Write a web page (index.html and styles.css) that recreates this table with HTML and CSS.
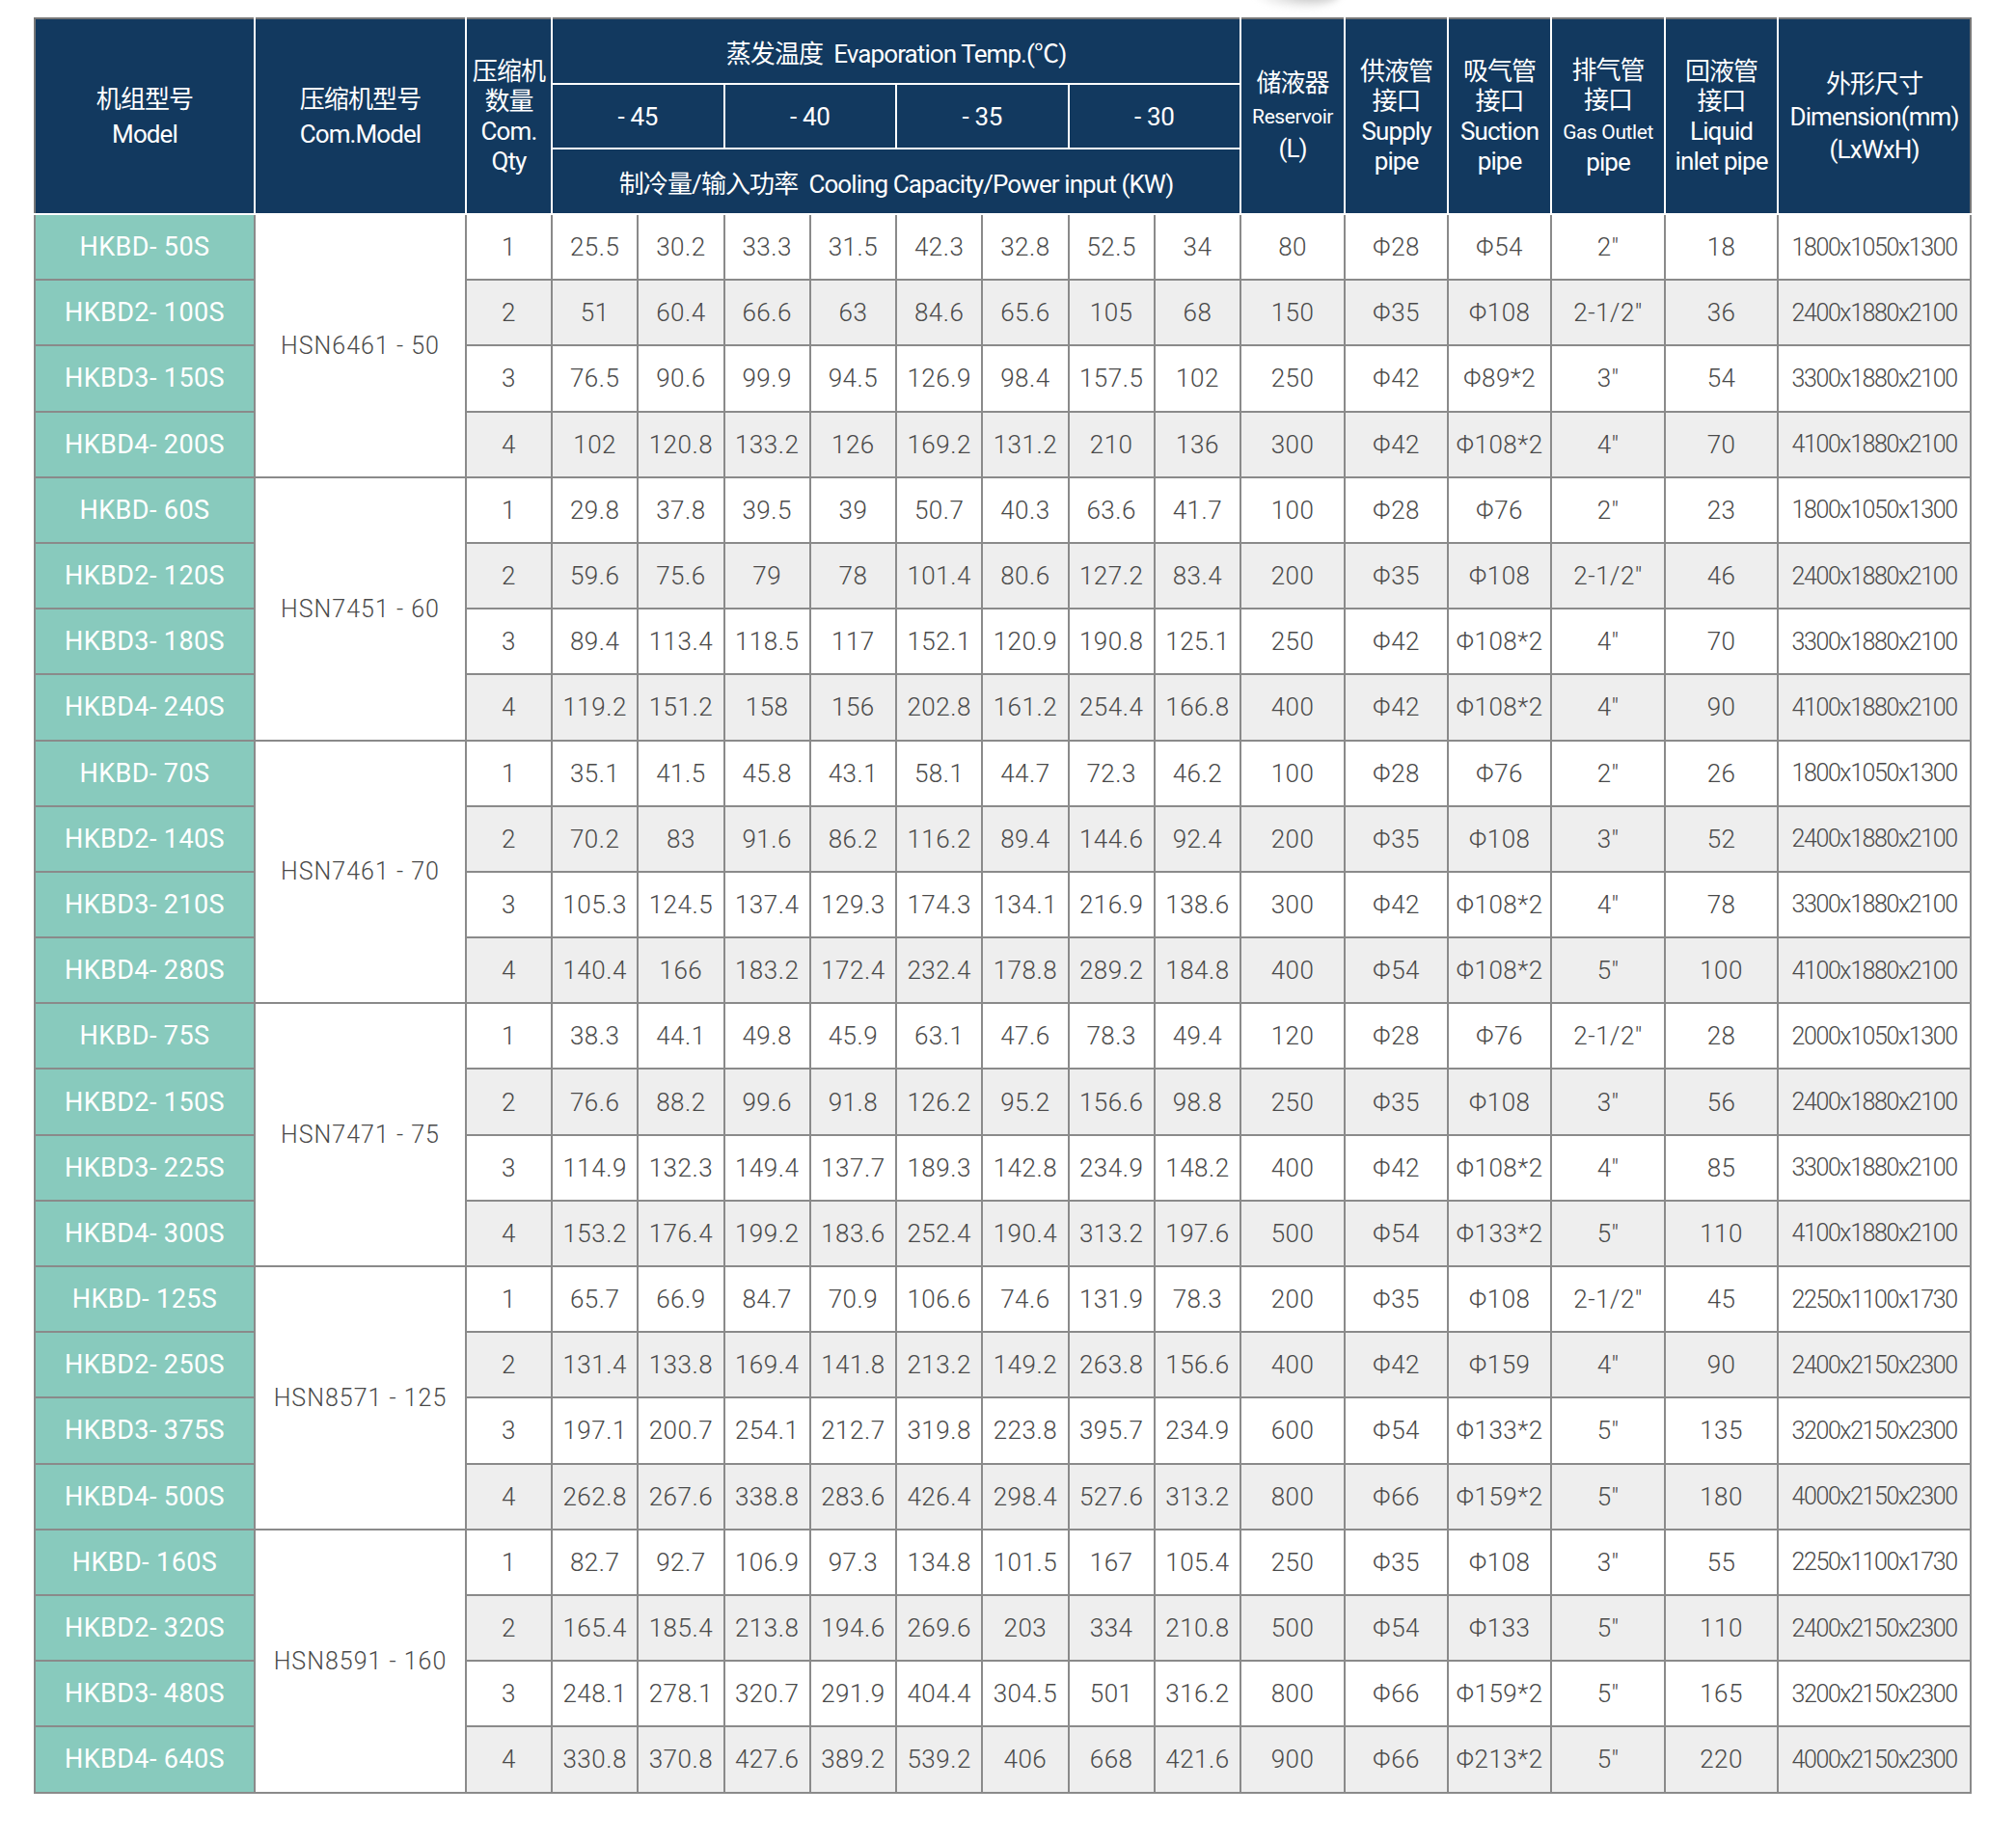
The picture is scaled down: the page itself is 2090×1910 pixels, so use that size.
FILE: index.html
```html
<!DOCTYPE html>
<html lang="zh">
<head>
<meta charset="utf-8">
<title>HKBD</title>
<link rel="stylesheet" href="styles.css">
</head>
<body>
<div class="page">
<div class="shadow"></div>
<table class="spec">
<colgroup>
<col class="c-model"><col class="c-com"><col class="c-qty">
<col class="c-d"><col class="c-d"><col class="c-d"><col class="c-d"><col class="c-d"><col class="c-d"><col class="c-d"><col class="c-d">
<col class="c-res"><col class="c-sup"><col class="c-suc"><col class="c-gas"><col class="c-liq"><col class="c-dim">
</colgroup>
<thead>
<tr class="h1">
<th rowspan="3" class="first lh36">机组型号<br>Model</th>
<th rowspan="3" class="lh36">压缩机型号<br>Com.Model</th>
<th rowspan="3" class="lh31">压缩机<br>数量<br>Com.<br>Qty</th>
<th colspan="8">蒸发温度&nbsp;&nbsp;Evaporation Temp.(℃)</th>
<th rowspan="3" class="lh35">储液器<br><span class="sm">Reservoir</span><br>(L)</th>
<th rowspan="3" class="lh31">供液管<br>接口<br>Supply<br>pipe</th>
<th rowspan="3" class="lh31">吸气管<br>接口<br>Suction<br>pipe</th>
<th rowspan="3" class="lh31">排气管<br>接口<br><span class="sm">Gas Outlet</span><br>pipe</th>
<th rowspan="3" class="lh31">回液管<br>接口<br>Liquid<br>inlet pipe</th>
<th rowspan="3" class="last lh34">外形尺寸<br>Dimension(mm)<br>(LxWxH)</th>
</tr>
<tr class="h2">
<th colspan="2">- 45</th><th colspan="2">- 40</th><th colspan="2">- 35</th><th colspan="2">- 30</th>
</tr>
<tr class="h3">
<th colspan="8">制冷量/输入功率&nbsp;&nbsp;Cooling Capacity/Power input (KW)</th>
</tr>
</thead>
<tbody>
<tr><td class="m">HKBD- 50S</td><td rowspan="4" class="cm">HSN6461 - 50</td><td>1</td><td>25.5</td><td>30.2</td><td>33.3</td><td>31.5</td><td>42.3</td><td>32.8</td><td>52.5</td><td>34</td><td>80</td><td>Φ28</td><td>Φ54</td><td>2″</td><td>18</td><td class="dim">1800x1050x1300</td></tr>
<tr class="alt"><td class="m">HKBD2- 100S</td><td>2</td><td>51</td><td>60.4</td><td>66.6</td><td>63</td><td>84.6</td><td>65.6</td><td>105</td><td>68</td><td>150</td><td>Φ35</td><td>Φ108</td><td>2-1/2″</td><td>36</td><td class="dim">2400x1880x2100</td></tr>
<tr><td class="m">HKBD3- 150S</td><td>3</td><td>76.5</td><td>90.6</td><td>99.9</td><td>94.5</td><td>126.9</td><td>98.4</td><td>157.5</td><td>102</td><td>250</td><td>Φ42</td><td>Φ89*2</td><td>3″</td><td>54</td><td class="dim">3300x1880x2100</td></tr>
<tr class="alt"><td class="m">HKBD4- 200S</td><td>4</td><td>102</td><td>120.8</td><td>133.2</td><td>126</td><td>169.2</td><td>131.2</td><td>210</td><td>136</td><td>300</td><td>Φ42</td><td>Φ108*2</td><td>4″</td><td>70</td><td class="dim">4100x1880x2100</td></tr>

<tr><td class="m">HKBD- 60S</td><td rowspan="4" class="cm">HSN7451 - 60</td><td>1</td><td>29.8</td><td>37.8</td><td>39.5</td><td>39</td><td>50.7</td><td>40.3</td><td>63.6</td><td>41.7</td><td>100</td><td>Φ28</td><td>Φ76</td><td>2″</td><td>23</td><td class="dim">1800x1050x1300</td></tr>
<tr class="alt"><td class="m">HKBD2- 120S</td><td>2</td><td>59.6</td><td>75.6</td><td>79</td><td>78</td><td>101.4</td><td>80.6</td><td>127.2</td><td>83.4</td><td>200</td><td>Φ35</td><td>Φ108</td><td>2-1/2″</td><td>46</td><td class="dim">2400x1880x2100</td></tr>
<tr><td class="m">HKBD3- 180S</td><td>3</td><td>89.4</td><td>113.4</td><td>118.5</td><td>117</td><td>152.1</td><td>120.9</td><td>190.8</td><td>125.1</td><td>250</td><td>Φ42</td><td>Φ108*2</td><td>4″</td><td>70</td><td class="dim">3300x1880x2100</td></tr>
<tr class="alt"><td class="m">HKBD4- 240S</td><td>4</td><td>119.2</td><td>151.2</td><td>158</td><td>156</td><td>202.8</td><td>161.2</td><td>254.4</td><td>166.8</td><td>400</td><td>Φ42</td><td>Φ108*2</td><td>4″</td><td>90</td><td class="dim">4100x1880x2100</td></tr>

<tr><td class="m">HKBD- 70S</td><td rowspan="4" class="cm">HSN7461 - 70</td><td>1</td><td>35.1</td><td>41.5</td><td>45.8</td><td>43.1</td><td>58.1</td><td>44.7</td><td>72.3</td><td>46.2</td><td>100</td><td>Φ28</td><td>Φ76</td><td>2″</td><td>26</td><td class="dim">1800x1050x1300</td></tr>
<tr class="alt"><td class="m">HKBD2- 140S</td><td>2</td><td>70.2</td><td>83</td><td>91.6</td><td>86.2</td><td>116.2</td><td>89.4</td><td>144.6</td><td>92.4</td><td>200</td><td>Φ35</td><td>Φ108</td><td>3″</td><td>52</td><td class="dim">2400x1880x2100</td></tr>
<tr><td class="m">HKBD3- 210S</td><td>3</td><td>105.3</td><td>124.5</td><td>137.4</td><td>129.3</td><td>174.3</td><td>134.1</td><td>216.9</td><td>138.6</td><td>300</td><td>Φ42</td><td>Φ108*2</td><td>4″</td><td>78</td><td class="dim">3300x1880x2100</td></tr>
<tr class="alt"><td class="m">HKBD4- 280S</td><td>4</td><td>140.4</td><td>166</td><td>183.2</td><td>172.4</td><td>232.4</td><td>178.8</td><td>289.2</td><td>184.8</td><td>400</td><td>Φ54</td><td>Φ108*2</td><td>5″</td><td>100</td><td class="dim">4100x1880x2100</td></tr>

<tr><td class="m">HKBD- 75S</td><td rowspan="4" class="cm">HSN7471 - 75</td><td>1</td><td>38.3</td><td>44.1</td><td>49.8</td><td>45.9</td><td>63.1</td><td>47.6</td><td>78.3</td><td>49.4</td><td>120</td><td>Φ28</td><td>Φ76</td><td>2-1/2″</td><td>28</td><td class="dim">2000x1050x1300</td></tr>
<tr class="alt"><td class="m">HKBD2- 150S</td><td>2</td><td>76.6</td><td>88.2</td><td>99.6</td><td>91.8</td><td>126.2</td><td>95.2</td><td>156.6</td><td>98.8</td><td>250</td><td>Φ35</td><td>Φ108</td><td>3″</td><td>56</td><td class="dim">2400x1880x2100</td></tr>
<tr><td class="m">HKBD3- 225S</td><td>3</td><td>114.9</td><td>132.3</td><td>149.4</td><td>137.7</td><td>189.3</td><td>142.8</td><td>234.9</td><td>148.2</td><td>400</td><td>Φ42</td><td>Φ108*2</td><td>4″</td><td>85</td><td class="dim">3300x1880x2100</td></tr>
<tr class="alt"><td class="m">HKBD4- 300S</td><td>4</td><td>153.2</td><td>176.4</td><td>199.2</td><td>183.6</td><td>252.4</td><td>190.4</td><td>313.2</td><td>197.6</td><td>500</td><td>Φ54</td><td>Φ133*2</td><td>5″</td><td>110</td><td class="dim">4100x1880x2100</td></tr>

<tr><td class="m">HKBD- 125S</td><td rowspan="4" class="cm">HSN8571 - 125</td><td>1</td><td>65.7</td><td>66.9</td><td>84.7</td><td>70.9</td><td>106.6</td><td>74.6</td><td>131.9</td><td>78.3</td><td>200</td><td>Φ35</td><td>Φ108</td><td>2-1/2″</td><td>45</td><td class="dim">2250x1100x1730</td></tr>
<tr class="alt"><td class="m">HKBD2- 250S</td><td>2</td><td>131.4</td><td>133.8</td><td>169.4</td><td>141.8</td><td>213.2</td><td>149.2</td><td>263.8</td><td>156.6</td><td>400</td><td>Φ42</td><td>Φ159</td><td>4″</td><td>90</td><td class="dim">2400x2150x2300</td></tr>
<tr><td class="m">HKBD3- 375S</td><td>3</td><td>197.1</td><td>200.7</td><td>254.1</td><td>212.7</td><td>319.8</td><td>223.8</td><td>395.7</td><td>234.9</td><td>600</td><td>Φ54</td><td>Φ133*2</td><td>5″</td><td>135</td><td class="dim">3200x2150x2300</td></tr>
<tr class="alt"><td class="m">HKBD4- 500S</td><td>4</td><td>262.8</td><td>267.6</td><td>338.8</td><td>283.6</td><td>426.4</td><td>298.4</td><td>527.6</td><td>313.2</td><td>800</td><td>Φ66</td><td>Φ159*2</td><td>5″</td><td>180</td><td class="dim">4000x2150x2300</td></tr>

<tr><td class="m">HKBD- 160S</td><td rowspan="4" class="cm">HSN8591 - 160</td><td>1</td><td>82.7</td><td>92.7</td><td>106.9</td><td>97.3</td><td>134.8</td><td>101.5</td><td>167</td><td>105.4</td><td>250</td><td>Φ35</td><td>Φ108</td><td>3″</td><td>55</td><td class="dim">2250x1100x1730</td></tr>
<tr class="alt"><td class="m">HKBD2- 320S</td><td>2</td><td>165.4</td><td>185.4</td><td>213.8</td><td>194.6</td><td>269.6</td><td>203</td><td>334</td><td>210.8</td><td>500</td><td>Φ54</td><td>Φ133</td><td>5″</td><td>110</td><td class="dim">2400x2150x2300</td></tr>
<tr><td class="m">HKBD3- 480S</td><td>3</td><td>248.1</td><td>278.1</td><td>320.7</td><td>291.9</td><td>404.4</td><td>304.5</td><td>501</td><td>316.2</td><td>800</td><td>Φ66</td><td>Φ159*2</td><td>5″</td><td>165</td><td class="dim">3200x2150x2300</td></tr>
<tr class="alt"><td class="m">HKBD4- 640S</td><td>4</td><td>330.8</td><td>370.8</td><td>427.6</td><td>389.2</td><td>539.2</td><td>406</td><td>668</td><td>421.6</td><td>900</td><td>Φ66</td><td>Φ213*2</td><td>5″</td><td>220</td><td class="dim">4000x2150x2300</td></tr>
</tbody>
</table>
</div>
</body>
</html>
```
FILE: styles.css
```css
* { box-sizing: border-box; }
html, body { margin: 0; padding: 0; background: #ffffff; }
.page {
  position: relative;
  padding: 18px 0 0 35px;
  width: 2090px;
  height: 1910px;
  font-family: Roboto, "Noto Sans CJK SC", sans-serif;
}
.shadow {
  position: absolute;
  left: 1300px;
  top: -24px;
  width: 90px;
  height: 34px;
  border-radius: 50%;
  background: radial-gradient(ellipse at 65% 50%, rgba(120,120,120,0.55) 0%, rgba(160,160,160,0.25) 45%, rgba(255,255,255,0) 75%);
  filter: blur(3px);
}
.spec {
  border-collapse: collapse;
  table-layout: fixed;
  width: 2007px;
}
.c-model { width: 228px; }
.c-com { width: 219px; }
.c-qty { width: 89px; }
.c-d { width: 89.25px; }
.c-res { width: 108px; }
.c-sup { width: 107px; }
.c-suc { width: 107px; }
.c-gas { width: 118px; }
.c-liq { width: 117px; }
.c-dim { width: 200px; }

thead th {
  background: #12395f;
  color: #ffffff;
  font-weight: 400;
  font-size: 26px;
  letter-spacing: -0.9px;
  border: 2px solid #ffffff;
  text-align: center;
  vertical-align: middle;
  padding: 0;
  white-space: nowrap;
  font-family: Roboto, "Noto Sans CJK SC", sans-serif;
}
thead tr.h1 th { border-top: 2px solid #777777; }
thead th.first { border-left: 2px solid #777777; }
thead th.last { border-right: 2px solid #777777; }
tr.h1 { height: 68px; }
tr.h2 { height: 67px; }
tr.h3 { height: 68px; }
tr.h2 th { font-size: 26px; letter-spacing: -0.3px; }
.lh36 { line-height: 36px; }
.lh35 { line-height: 33px; }
.lh34 { line-height: 34px; }
.lh31 { line-height: 31px; }
.sm { font-size: 21px; letter-spacing: -0.4px; }

tbody tr { height: 68.2px; }
tbody td {
  border: 2px solid #8a8a8a;
  text-align: center;
  vertical-align: middle;
  padding: 0;
  font-size: 26px;
  font-weight: 300;
  color: #4a4a4a;
  white-space: nowrap;
  background: #ffffff;
  letter-spacing: 0.5px;
}
tbody tr.alt td { background: #eeeeee; }
tbody td.m, tbody tr.alt td.m {
  background: #88cabd;
  color: #ffffff;
  font-weight: 400;
  font-size: 27px;
  letter-spacing: 0.4px;
}
tbody td.cm {
  background: #ffffff;
  color: #4a4a4a;
  font-size: 25px;
  letter-spacing: 1px;
}
tbody td.dim { letter-spacing: -1.4px; font-size: 25px; }
```
